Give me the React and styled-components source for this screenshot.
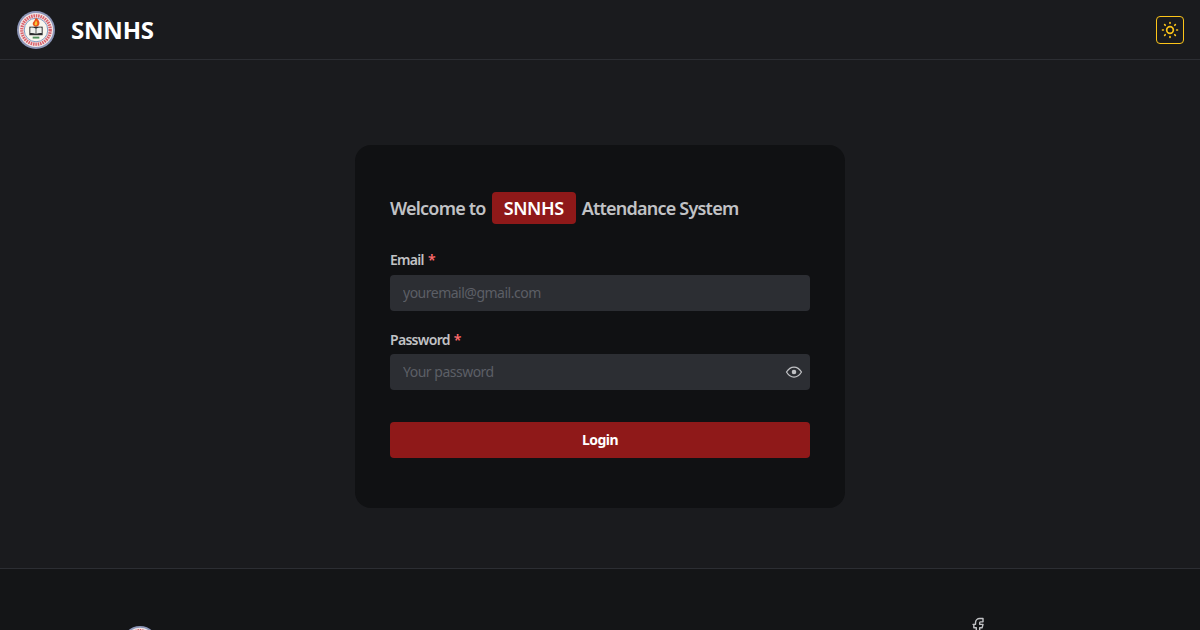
import React from "react";
import styled, { createGlobalStyle } from "styled-components";

const GlobalStyle = createGlobalStyle`
  html, body {
    margin: 0;
    height: 630px;
    overflow: hidden;
    background: #1a1b1e;
    font-family: "Noto Sans", "Open Sans", sans-serif;
  }
`;

const Page = styled.div`
  display: flex;
  flex-direction: column;
  width: 1200px;
`;

const Header = styled.header`
  display: flex;
  justify-content: space-between;
  align-items: center;
  height: 59px;
  padding: 0 16px 0 17px;
  border-bottom: 1px solid #2c2e33;
`;

const Brand = styled.div`
  display: flex;
  align-items: center;
  gap: 16px;
`;

const BrandName = styled.span`
  color: #fff;
  font-size: 24px;
  font-weight: 700;
  line-height: 1;
  letter-spacing: -0.2px;
`;

const ThemeButton = styled.button`
  display: flex;
  justify-content: center;
  align-items: center;
  width: 28px;
  height: 28px;
  padding: 0;
  background: transparent;
  border: 1px solid #fcc419;
  border-radius: 4px;
  color: #fcc419;
`;

const Main = styled.main`
  display: flex;
  justify-content: center;
  height: 508px;
  padding-top: 85px;
  box-sizing: border-box;
`;

const Card = styled.section`
  display: flex;
  flex-direction: column;
  width: 490px;
  height: 363px;
  padding: 47px 35px 0;
  box-sizing: border-box;
  background: #101113;
  border-radius: 16px;
`;

const Title = styled.h1`
  display: flex;
  align-items: center;
  gap: 6px;
  margin: 0 0 26px;
  color: #c1c2c5;
  font-size: 18px;
  font-weight: 600;
  line-height: 32px;
  letter-spacing: -0.78px;
`;

const Badge = styled.span`
  height: 32px;
  padding: 0 12px;
  background: #8f1919;
  border-radius: 4px;
  color: #fff;
  letter-spacing: -0.4px;
`;

const Field = styled.div`
  display: flex;
  flex-direction: column;
  margin-bottom: ${({ $gap }) => $gap}px;
`;

const Label = styled.label`
  margin-bottom: ${({ $gap }) => $gap}px;
  color: #c1c2c5;
  font-size: 14px;
  font-weight: 600;
  line-height: 20px;
  letter-spacing: -0.7px;
`;

const Required = styled.span`
  margin-left: 4px;
  color: #ff6b6b;
`;

const InputWrap = styled.div`
  position: relative;
  display: flex;
`;

const Input = styled.input`
  width: 100%;
  height: 36px;
  padding: 0 12px 2px 13px;
  box-sizing: border-box;
  background: #2c2e33;
  border: 0;
  border-radius: 4px;
  color: #c1c2c5;
  font: 400 14px "Noto Sans", "Open Sans", sans-serif;
  letter-spacing: -0.5px;

  &::placeholder {
    color: #5c5f66;
    opacity: 1;
  }
`;

const EyeButton = styled.span`
  position: absolute;
  top: 8px;
  right: 6px;
  display: flex;
  color: #c1c2c5;
`;

const LoginButton = styled.button`
  height: 36px;
  padding: 0 0 2px;
  background: #8f1919;
  border: 0;
  border-radius: 4px;
  color: #fff;
  font: 700 14px "Noto Sans", "Open Sans", sans-serif;
  letter-spacing: -0.5px;
`;

const Footer = styled.footer`
  display: flex;
  justify-content: space-between;
  height: 200px;
  padding: 47px 212px 0 122px;
  box-sizing: border-box;
  background: #141517;
  border-top: 1px solid #2c2e33;
`;

const FooterLogo = styled.div`
  margin-top: 10px;
`;

const Social = styled.div`
  display: flex;
  color: #c1c2c5;
`;

function TablerIcon({ size, width = 2, children }) {
  return (
    <svg width={size} height={size} viewBox="0 0 24 24" fill="none" stroke="currentColor" strokeWidth={width} strokeLinecap="round" strokeLinejoin="round">
      {children}
    </svg>
  );
}

function Logo({ size }) {
  return (
    <svg width={size} height={size} viewBox="0 0 40 40">
      <circle cx="20" cy="20" r="20" fill="#8c96b8" />
      <circle cx="20" cy="20" r="18" fill="#f3e7e6" />
      <circle cx="20" cy="20" r="15" fill="none" stroke="#d9606a" strokeWidth="3.4" strokeDasharray="1.6 0.9" />
      <circle cx="20" cy="20" r="12.4" fill="#f8f6ef" stroke="#5c7fb5" strokeWidth="0.8" />
      <path d="M20 7c3 2 4.300 4.800 3.400 7.300-.6 1.500-2 2.200-3.400 2.200s-3-1-3.400-2.600c-.4-1.900 1.400-2.800 1.900-4.100.3-1 .7-1.900 1.500-2.800z" fill="#e8501c" />
      <path d="M20 10c1.200 1.400 1.700 2.700 1.200 4-.2.800-.7 1.200-1.300 1.200s-1.300-.5-1.400-1.200c-.1-1.300 1-2.300 1.500-4z" fill="#f7c832" />
      <path d="M13 16.500h14v9h-14z" fill="#2b2b2e" />
      <path d="M14 17.500c2 -.4 4 0 5.600 .9v5.600c-1.600-.8-3.600-1.200-5.600-.8zM26 17.500c-2-.4-4 0-5.600 .9v5.600c1.600-.8 3.600-1.200 5.600-.8z" fill="#eef0ee" />
      <path d="M16.500 27h7v2h-7z" fill="#4f8f5b" />
    </svg>
  );
}

export default function App() {
  return (
    <Page>
      <GlobalStyle />
      <Header>
        <Brand>
          <Logo size={38} />
          <BrandName>SNNHS</BrandName>
        </Brand>
        <ThemeButton>
          <TablerIcon size={20}>
            <path d="M8 12a4 4 0 1 0 8 0a4 4 0 1 0 -8 0" />
            <path d="M3 12h1m8 -9v1m8 8h1m-9 8v1m-6.4 -15.4l.7 .7m12.1 -.7l-.7 .7m0 11.4l.7 .7m-12.1 -.7l-.7 .7" />
          </TablerIcon>
        </ThemeButton>
      </Header>
      <Main>
        <Card>
          <Title>
            Welcome to <Badge>SNNHS</Badge> Attendance System
          </Title>
          <Field $gap={19}>
            <Label $gap={5}>
              Email<Required>*</Required>
            </Label>
            <Input placeholder="youremail@gmail.com" />
          </Field>
          <Field $gap={32}>
            <Label $gap={4}>
              Password<Required>*</Required>
            </Label>
            <InputWrap>
              <Input placeholder="Your password" />
              <EyeButton>
                <TablerIcon size={20} width={1.5}>
                  <path d="M10 12a2 2 0 1 0 4 0a2 2 0 0 0 -4 0" fill="currentColor" />
                  <path d="M21 12c-2.400 4 -5.400 6 -9 6c-3.600 0 -6.600 -2 -9 -6c2.400 -4 5.400 -6 9 -6c3.600 0 6.600 2 9 6" />
                </TablerIcon>
              </EyeButton>
            </InputWrap>
          </Field>
          <LoginButton>Login</LoginButton>
        </Card>
      </Main>
      <Footer>
        <FooterLogo>
          <Logo size={36} />
        </FooterLogo>
        <Social>
          <TablerIcon size={20} width={1.7}>
            <path d="M7 10v4h3v7h4v-7h3l1 -4h-4v-2a1 1 0 0 1 1 -1h3v-4h-4a5 5 0 0 0 -5 5v2h-3" />
          </TablerIcon>
        </Social>
      </Footer>
    </Page>
  );
}
